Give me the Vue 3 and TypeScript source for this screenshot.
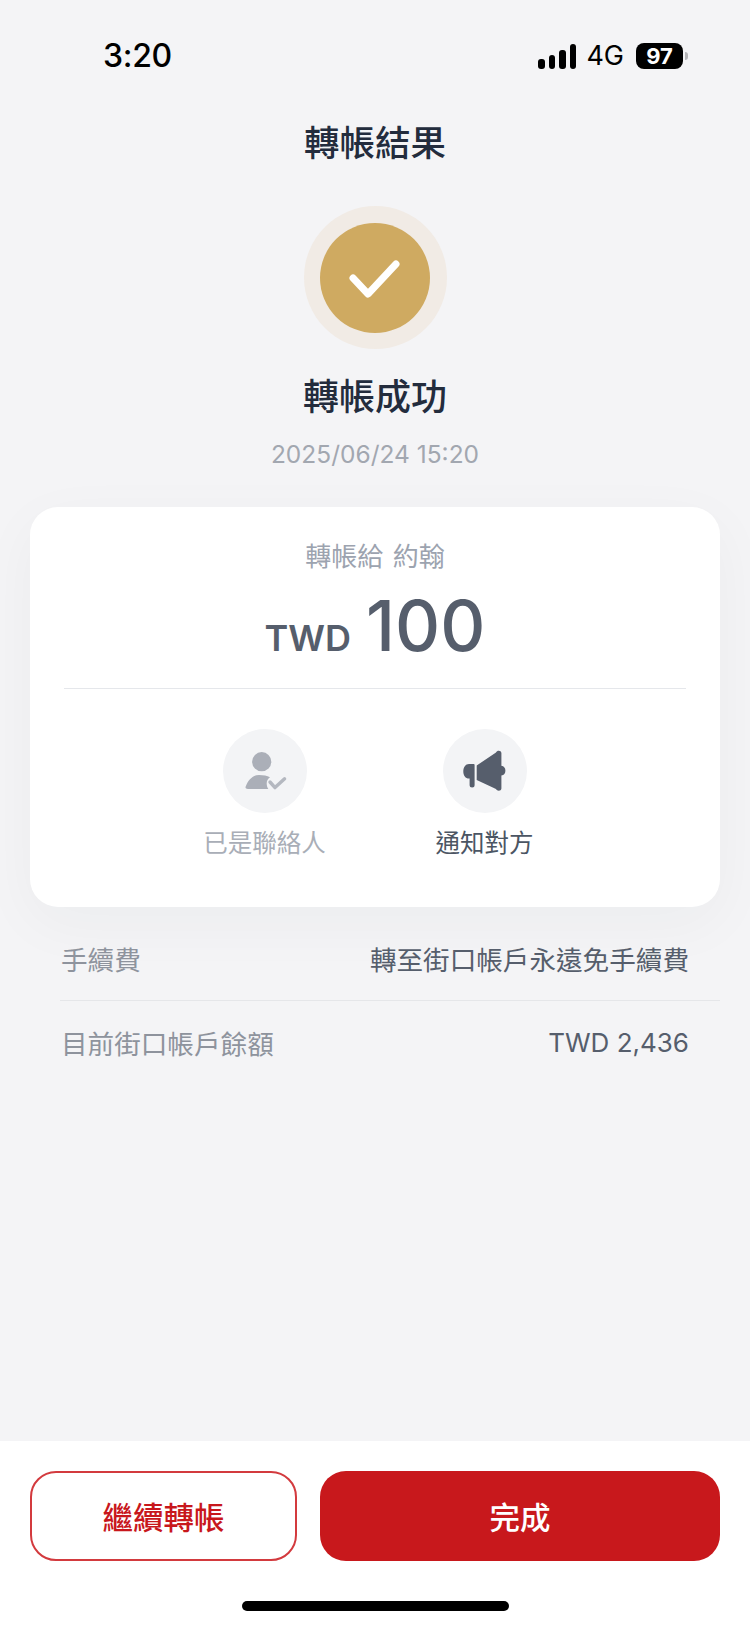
<script setup lang="ts">
interface Row { label: string; value: string }
const rows: Row[] = [
  { label: '手續費', value: '轉至街口帳戶永遠免手續費' },
  { label: '目前街口帳戶餘額', value: 'TWD 2,436' },
]
</script>

<template>
  <div class="page">
    <div class="status">
      <span class="time">3:20</span>
      <div class="status-right">
        <div class="signal"><i class="b1"></i><i class="b2"></i><i class="b3"></i><i class="b4"></i></div>
        <span class="net">4G</span>
        <div class="battery"><span>97</span></div>
        <i class="nub"></i>
      </div>
    </div>

    <h1 class="title">轉帳結果</h1>

    <div class="halo">
      <div class="disc">
        <svg width="110" height="110" viewBox="0 0 110 110">
          <path d="M33 55 48 71 76 41" fill="none" stroke="#fff" stroke-width="7" stroke-linecap="round" stroke-linejoin="round" />
        </svg>
      </div>
    </div>

    <h2 class="result">轉帳成功</h2>
    <p class="date">2025/06/24 15:20</p>

    <section class="card">
      <p class="to">轉帳給 約翰</p>
      <p class="amount"><span class="cur">TWD</span><span class="num">100</span></p>
      <div class="rule"></div>
      <div class="actions">
        <div class="action muted">
          <div class="round">
            <svg width="84" height="84" viewBox="0 0 84 84">
              <circle cx="38.7" cy="32.7" r="9.6" fill="#abafb8" />
              <path d="M22.7 57.5C25 51 29.5 46 36 46c4.500 0 8 .7 11 2.300-2.200 1.600-3.300 3.600-3.300 6.200 0 2 .6 4 1.600 5.500H25c-2 0-3-1.100-2.300-2.500Z" fill="#abafb8" />
              <path d="M47 53l5 5.600 9.600-8.800" fill="none" stroke="#b4b8c0" stroke-width="3.400" stroke-linecap="round" stroke-linejoin="round" />
            </svg>
          </div>
          <span>已是聯絡人</span>
        </div>
        <div class="action">
          <div class="round">
            <svg width="84" height="84" viewBox="0 0 84 84">
              <path d="M33.700 36.500 53 23.500c1-2.300 5.200-2.300 5.400.6V36.800a5 5 0 0 1 0 9.800V59.500c-.2 2.900-4.400 2.900-5.400.6L33.700 51Z" fill="#565e6c" />
              <path d="M26 35h4.700a.9.9 0 0 1 .9.900V56a2.500 2.500 0 0 1-5 0V49.500h-.6c-3.500 0-5.700-3.200-5.700-7.100 0-4 2.200-7.400 5.700-7.400Z" fill="#565e6c" />
            </svg>
          </div>
          <span>通知對方</span>
        </div>
      </div>
    </section>

    <div class="rows">
      <div v-for="r in rows" :key="r.label" class="row">
        <span class="k">{{ r.label }}</span>
        <span class="v">{{ r.value }}</span>
      </div>
    </div>

    <div class="spacer"></div>

    <footer class="footer">
      <div class="buttons">
        <button class="btn ghost">繼續轉帳</button>
        <button class="btn solid">完成</button>
      </div>
      <div class="home"></div>
    </footer>
  </div>
</template>

<style>
html, body { margin: 0; background: #f4f4f6; }
</style>

<style scoped>
.page {
  width: 750px;
  height: 1626px;
  display: flex;
  flex-direction: column;
  align-items: center;
  background: #f4f4f6;
  font-family: Inter, "Noto Sans CJK TC", sans-serif;
  overflow: hidden;
}
.status {
  width: 100%;
  box-sizing: border-box;
  height: 113px;
  padding: 39px 62px 0 103px;
  display: flex;
  justify-content: space-between;
  align-items: flex-start;
  color: #000;
  flex: none;
}
.time { font-size: 32px; line-height: 34px; font-weight: 500; letter-spacing: -0.3px; }
.status-right { display: flex; align-items: center; height: 34px; }
.signal { display: flex; align-items: flex-end; gap: 4px; height: 25px; }
.signal i { display: block; width: 6.500px; border-radius: 3px; background: #000; }
.b1 { height: 10px; }
.b2 { height: 14px; }
.b3 { height: 19px; }
.b4 { height: 25px; }
.net { font-size: 27px; line-height: 34px; font-weight: 400; margin-left: 10px; }
.battery {
  margin-left: 12px;
  width: 47px;
  height: 26px;
  border-radius: 8px;
  background: #000;
  display: flex;
  align-items: center;
  justify-content: center;
}
.battery span { color: #fff; font-size: 22px; font-weight: 700; line-height: 26px; }
.nub { display: block; width: 3px; height: 8px; margin-left: 2px; border-radius: 0 4px 4px 0; background: #b5b5b8; }

.title {
  margin: 0;
  font-size: 35.500px;
  line-height: 62px;
  font-weight: 500;
  color: #232c3d;
  flex: none;
}
.halo {
  margin-top: 31px;
  width: 143px;
  height: 143px;
  border-radius: 50%;
  background: #f1ebe5;
  display: flex;
  align-items: center;
  justify-content: center;
  flex: none;
}
.disc { width: 110px; height: 110px; border-radius: 50%; background: #cfaa61; }
.disc svg { display: block; }
.result {
  margin: 22px 0 0;
  font-size: 36px;
  line-height: 52px;
  font-weight: 500;
  color: #232c3d;
  flex: none;
}
.date {
  margin: 16px 0 0;
  font-size: 24.500px;
  line-height: 30px;
  color: #a2a7b0;
  flex: none;
}
.card {
  margin-top: 38px;
  width: 690px;
  height: 400px;
  box-sizing: border-box;
  padding: 0 34px;
  border-radius: 28px;
  background: #fff;
  box-shadow: 0 16px 60px rgba(30, 40, 60, 0.04);
  display: flex;
  flex-direction: column;
  align-items: center;
  flex: none;
}
.to { margin: 32px 0 0; font-size: 26px; line-height: 36px; color: #9ca3af; word-spacing: 2px; }
.amount { margin: 9px 0 0; height: 84px; display: flex; align-items: baseline; color: #565e6c; }
.cur { font-size: 36px; font-weight: 600; line-height: 84px; }
.num { font-size: 70px; font-weight: 500; line-height: 84px; margin-left: 15px; }
.rule { width: 100%; height: 1px; margin-top: 20px; background: #e5e7eb; flex: none; }
.actions { margin-top: 40px; margin-right: 4px; display: flex; gap: 103px; }
.action {
  width: 114px;
  display: flex;
  flex-direction: column;
  align-items: center;
  font-size: 24.500px;
  line-height: 34px;
  color: #4b5563;
}
.action.muted { width: 120px; color: #a9aeb7; }
.action span { white-space: nowrap; margin-top: 13px; }
.round { width: 84px; height: 84px; border-radius: 50%; background: #f3f4f6; flex: none; }
.round svg { display: block; }

.rows { width: 100%; box-sizing: border-box; padding: 10px 30px 0 60px; flex: none; }
.row {
  height: 83px;
  padding: 0 31px 0 1px;
  box-sizing: border-box;
  display: flex;
  align-items: center;
  justify-content: space-between;
  font-size: 26.600px;
}
.row + .row { border-top: 1px solid #e5e6e9; }
.row + .row .v { font-size: 26px; }
.k { color: #8e939d; }
.v { color: #565e6c; }

.spacer { flex: 1; }
.footer {
  width: 100%;
  height: 185px;
  box-sizing: border-box;
  background: #fff;
  padding-top: 30px;
  display: flex;
  flex-direction: column;
  align-items: center;
  flex: none;
}
.buttons { width: 690px; display: grid; grid-template-columns: 267px 400px; gap: 23px; }
.btn {
  height: 90px;
  box-sizing: border-box;
  border-radius: 26px;
  font-family: inherit;
  font-size: 30.500px;
  font-weight: 500;
  padding: 0;
}
.ghost { background: #fff; color: #c8171c; border: 2px solid #d33a3e; }
.solid { background: #c8181c; color: #fff; border: 0; }
.home { width: 267px; height: 10px; margin-top: 40px; border-radius: 5px; background: #000; }
</style>
